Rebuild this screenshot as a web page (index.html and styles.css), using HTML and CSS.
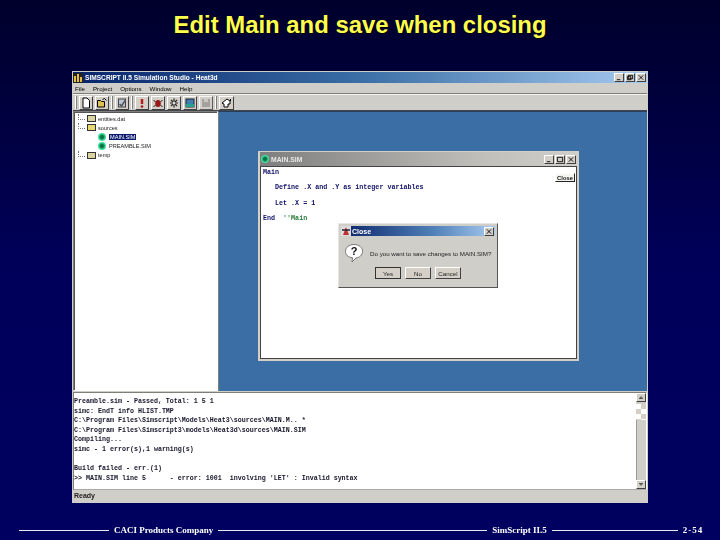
FILE: index.html
```html
<!DOCTYPE html>
<html lang="en">
<head>
<meta charset="utf-8">
<title>Edit Main and save when closing</title>
<link rel="stylesheet" href="styles.css">
</head>
<body>
<h1 class="slide-title">Edit Main and save when closing</h1>
<main class="app">
  <div class="titlebar">
    <svg class="app-icon" viewBox="0 0 10 10"><rect width="10" height="10" fill="#222"/><path d="M1 9V3h2v6zM4 9V1h2v8zM7 9V4h2v5z" fill="#e8c040"/></svg>
    <span class="titlebar-text">SIMSCRIPT II.5 Simulation Studio - Heat3d</span>
    <span class="wincontrols">
      <span class="winbtn"><svg viewBox="0 0 9 8"><path d="M2 6.5h4" stroke="#000" fill="none"/></svg></span>
      <span class="winbtn"><svg viewBox="0 0 9 8"><path d="M2.5 1.5h5v4h-5zM1.5 3h4v3.5h-4z" stroke="#000" fill="none"/></svg></span>
      <span class="winbtn"><svg viewBox="0 0 9 8"><path d="M2 1.5l5 5M7 1.5l-5 5" stroke="#000" fill="none"/></svg></span>
    </span>
  </div>
  <nav class="menubar"><span>File</span><span>Project</span><span>Options</span><span>Window</span><span>Help</span></nav>
  <div class="toolbar">
    <span class="grip"></span>
    <span class="tool"><svg viewBox="0 0 11 12"><path d="M2.5 1h4l2.500 2.500V11h-6.500z" fill="#fff" stroke="#000"/></svg></span>
    <span class="tool"><svg viewBox="0 0 11 12"><path d="M1 10V3.500h3l1 1h3V10z" fill="#e0c050" stroke="#000"/><path d="M6 2.500l2-1 2 2" fill="none" stroke="#000"/></svg></span>
    <span class="grip"></span>
    <span class="tool"><svg viewBox="0 0 11 12"><rect x="2" y="2" width="7" height="8" fill="#b8c4d8" stroke="#444"/><path d="M3 7l2 2 4-6" fill="none" stroke="#555" stroke-width="1.500"/></svg></span>
    <span class="grip"></span>
    <span class="tool"><svg viewBox="0 0 11 12"><path d="M5.500 2v5" stroke="#b02020" stroke-width="2.500"/><circle cx="5.500" cy="9.500" r="1.300" fill="#a01818"/></svg></span>
    <span class="tool"><svg viewBox="0 0 11 12"><ellipse cx="5.500" cy="6.500" rx="2.800" ry="3.500" fill="#9a1818"/><path d="M1 3l2 2M10 3l-2 2M1 10l2-2M10 10l-2-2" stroke="#222"/></svg></span>
    <span class="tool"><svg viewBox="0 0 11 12"><path d="M5.500 1.500v9M1.500 6h8M2.500 3l6 6M8.500 3l-6 6" stroke="#222" stroke-width="1.200"/><circle cx="5.500" cy="6" r="1.500" fill="#ddd"/></svg></span>
    <span class="tool"><svg viewBox="0 0 11 12"><rect x="1.500" y="2" width="8" height="8" fill="#3f7fb0" stroke="#223"/><rect x="1.500" y="7" width="8" height="3" fill="#28a090"/></svg></span>
    <span class="tool tool-off"><svg viewBox="0 0 11 12"><rect x="1.500" y="2" width="8" height="8" fill="#989894"/><rect x="3.500" y="2" width="4" height="3" fill="#c8c6c2"/></svg></span>
    <span class="grip"></span>
    <span class="tool tool-wide"><svg viewBox="0 0 13 12"><path d="M2 6l5-4 3 2v3H8v3H4V7z" fill="#fff" stroke="#000"/><path d="M10.500 2v2" stroke="#000"/></svg></span>
  </div>
  <div class="workspace">
    <aside class="tree">
      <div class="tree-row"><span class="elbow"></span><span class="folder"></span><span>entities.dat</span></div>
      <div class="tree-row"><span class="elbow"></span><span class="folder folder-open"></span><span>sources</span></div>
      <div class="tree-row tree-leaf"><span class="file-icon"></span><span class="selected">MAIN.SIM</span></div>
      <div class="tree-row tree-leaf"><span class="file-icon"></span><span>PREAMBLE.SIM</span></div>
      <div class="tree-row"><span class="elbow"></span><span class="folder"></span><span>temp</span></div>
    </aside>
    <section class="mdi">
      <article class="child">
        <div class="child-title">
          <span class="file-icon"></span><span class="child-name">MAIN.SIM</span>
          <span class="wincontrols">
            <span class="winbtn"><svg viewBox="0 0 9 8"><path d="M2 6.500h4" stroke="#000" fill="none"/></svg></span>
            <span class="winbtn"><svg viewBox="0 0 9 8"><path d="M1.500 1.500h6v5h-6z" stroke="#000" fill="none"/></svg></span>
            <span class="winbtn"><svg viewBox="0 0 9 8"><path d="M2 1.500l5 5M7 1.500l-5 5" stroke="#000" fill="none"/></svg></span>
          </span>
        </div>
        <div class="editor">
          <button class="close-tag">Close</button>
          <pre class="code"><b>Main</b>

   Define .X and .Y as integer variables

   Let .X = 1

<b>End</b>  <span class="comment">''Main</span></pre>
        </div>
      </article>
      <div class="dialog">
        <div class="dialog-title">
          <svg class="dialog-icon" viewBox="0 0 10 10"><path d="M2 9l3-8 3 8z" fill="#c03030"/><path d="M1 4h8" stroke="#223" stroke-width="1.500"/></svg>
          <span class="dialog-name">Close</span>
          <span class="winbtn dialog-x"><svg viewBox="0 0 9 8"><path d="M2 1.500l5 5M7 1.500l-5 5" stroke="#000" fill="none"/></svg></span>
        </div>
        <div class="dialog-body">
          <svg class="question" viewBox="0 0 20 20"><path d="M10 1.500c5 0 8.500 2.800 8.500 6.800s-3.500 6.500-6.500 6.700l-4 4 .5-4.300C4 14.300 1.500 12 1.500 8.300 1.500 4.300 5 1.500 10 1.500z" fill="#fff" stroke="#777"/><text x="10" y="12" class="question-mark">?</text></svg>
          <span class="dialog-text">Do you want to save changes to MAIN.SIM?</span>
        </div>
        <div class="dialog-actions">
          <button class="btn btn-default">Yes</button>
          <button class="btn">No</button>
          <button class="btn">Cancel</button>
        </div>
      </div>
    </section>
  </div>
  <div class="output">
    <pre class="log">Preamble.sim - Passed, Total: 1 5 1
simc: EndT info HLIST.TMP
C:\Program Files\Simscript\Models\Heat3\sources\MAIN.M.. *
C:\Program Files\Simscript3\models\Heat3d\sources\MAIN.SIM
Compiling...
simc - 1 error(s),1 warning(s)

Build failed - err.(1)
&gt;&gt; MAIN.SIM line 5      - error: 1001  involving 'LET' : Invalid syntax</pre>
    <div class="scrollbar">
      <span class="arrow"><svg viewBox="0 0 9 9"><path d="M2 5.500h5M3.500 4h2" stroke="#000"/></svg></span>
      <span class="thumb"></span>
      <span class="track"></span>
      <span class="arrow"><svg viewBox="0 0 9 9"><path d="M2 3.500h5M3.500 5h2" stroke="#000"/></svg></span>
    </div>
  </div>
  <div class="statusbar">Ready</div>
</main>
<footer class="slide-footer">
  <span class="rule rule-a"></span><span>CACI Products Company</span>
  <span class="rule rule-b"></span><span>SimScript II.5</span>
  <span class="rule rule-c"></span><span class="page-no">2-54</span>
</footer>
</body>
</html>
```
FILE: styles.css
```css
* { box-sizing: border-box; }
html, body { margin: 0; height: 100%; }
body {
  width: 720px;
  height: 540px;
  overflow: hidden;
  display: flex;
  flex-direction: column;
  align-items: center;
  background: linear-gradient(#00002c 0%, #000038 14%, #00005a 50%, #000060 100%);
  font-family: "Liberation Sans", Arial, sans-serif;
}
.slide-title {
  height: 71px;
  margin: 0;
  padding-top: 11px;
  color: #ffff4d;
  font-size: 23.900px;
  line-height: 28px;
  font-weight: 700;
  text-shadow: 1px 1px 0 #000;
}
.app {
  width: 576px;
  height: 432px;
  display: flex;
  flex-direction: column;
  background: #d0cec8;
  padding: 1px;
  filter: blur(0.45px);
  color: #000;
  font-size: 7px;
}
.titlebar {
  height: 11px;
  flex: none;
  display: flex;
  align-items: center;
  background: linear-gradient(90deg, #08246b 0%, #3a6ea5 50%, #a6caf0 100%);
  color: #fff;
  font-weight: 700;
  font-size: 6.600px;
}
.app-icon { width: 10px; height: 10px; margin-right: 2px; }
.titlebar-text { flex: 1; white-space: nowrap; }
.wincontrols { display: flex; gap: 1px; margin-right: 1px; }
.winbtn {
  width: 10px;
  height: 9px;
  display: block;
  background: #d4d0c8;
  border: 1px solid;
  border-color: #fff #404040 #404040 #fff;
}
.winbtn svg { display: block; width: 8px; height: 7px; }
.menubar {
  height: 11px;
  flex: none;
  display: flex;
  align-items: center;
  gap: 8px;
  padding-left: 2px;
  border-bottom: 1px solid #807e78;
  font-size: 6.200px;
}
.toolbar {
  height: 17px;
  flex: none;
  display: flex;
  align-items: center;
  gap: 2px;
  padding-left: 2px;
  border-top: 1px solid #f4f2ee;
  border-bottom: 1px solid #40454f;
}
.grip {
  width: 2px;
  height: 13px;
  flex: none;
  border-left: 1px solid #fff;
  border-right: 1px solid #807e78;
}
.tool {
  width: 14px;
  height: 14px;
  flex: none;
  background: #d4d0c8;
  border: 1px solid;
  border-color: #fff #404040 #404040 #fff;
}
.tool svg { display: block; width: 12px; height: 12px; }
.tool-wide { width: 15px; }
.tool-wide svg { width: 13px; }
.tool-off { opacity: 0.8; }
.workspace { height: 280px; flex: none; display: flex; }
.tree {
  width: 145px;
  background: #fff;
  border: 1px solid;
  border-color: #807e78 #fff #fff #807e78;
  box-shadow: inset 1px 1px 0 #555;
  padding: 2px 0 0 4px;
  font-size: 5.600px;
  color: #222;
}
.tree-row { height: 9.200px; display: flex; align-items: center; gap: 2px; white-space: nowrap; }
.tree-leaf { padding-left: 20px; gap: 3px; }
.elbow {
  width: 7px;
  height: 6px;
  margin-top: -3px;
  border-left: 1px dotted #777;
  border-bottom: 1px dotted #777;
}
.folder {
  width: 9px;
  height: 7px;
  background: #d9d4a0;
  border: 1px solid #333;
}
.folder-open { background: #e8d870; }
.file-icon {
  width: 8px;
  height: 8px;
  flex: none;
  border-radius: 50%;
  background: radial-gradient(circle, #0c7040 25%, #40e0a0 60%);
}
.selected { background: #0a1a6e; color: #fff; padding: 0 1px; }
.mdi {
  position: relative;
  flex: 1;
  background: #3a6ea5;
  border-top: 1px solid #2a4058;
  border-left: 1px solid #807e78;
}
.child {
  position: absolute;
  left: 39px;
  top: 39px;
  width: 321px;
  height: 210px;
  display: flex;
  flex-direction: column;
  background: #d4d0c8;
  padding: 1px 2px 2px;
}
.child-title {
  height: 14px;
  flex: none;
  display: flex;
  align-items: center;
  gap: 2px;
  background: linear-gradient(90deg, #7e7e7e 0%, #c0bfba 70%, #d0cec8 100%);
  color: #e8e8e8;
  font-size: 6.800px;
  font-weight: 700;
  padding-left: 1px;
}
.child-name { flex: 1; }
.editor {
  position: relative;
  flex: 1;
  background: #fff;
  border: 1px solid #444;
}
.close-tag {
  position: absolute;
  top: 6px;
  right: 1px;
  width: 20px;
  height: 9px;
  padding: 0;
  background: #f4f4f0;
  border: 1px solid;
  border-color: #fff #222 #222 #fff;
  font: 700 5.800px "Liberation Sans", Arial, sans-serif;
  color: #111;
}
.code {
  margin: 0;
  padding: 2px 0 0 2px;
  font: 700 6.700px/7.700px "Liberation Mono", "Courier New", monospace;
  color: #101068;
}
.code b { color: #101068; }
.comment { color: #2a7a3a; }
.dialog {
  position: absolute;
  left: 119px;
  top: 111px;
  width: 160px;
  height: 65px;
  display: flex;
  flex-direction: column;
  background: #d0cec8;
  border: 1px solid;
  border-color: #e8e6e2 #555 #555 #e8e6e2;
  padding: 2px;
}
.dialog-title {
  height: 10px;
  flex: none;
  display: flex;
  align-items: center;
  gap: 1px;
  background: linear-gradient(90deg, #0a2468 0%, #5080b8 60%, #a6caf0 100%);
  color: #fff;
  font-size: 7px;
  font-weight: 700;
}
.dialog-icon { width: 10px; height: 10px; background: #ddd; }
.dialog-name { flex: 1; }
.dialog-x { margin-right: 1px; }
.dialog-body {
  display: flex;
  align-items: center;
  height: 31px;
  flex: none;
  padding: 3px 0 0 3px;
  gap: 6px;
}
.question { width: 20px; height: 20px; flex: none; }
.question-mark { font: 700 11px "Liberation Sans", Arial, sans-serif; text-anchor: middle; fill: #111; }
.dialog-text { font-size: 6.200px; white-space: nowrap; color: #222; }
.dialog-actions { display: flex; justify-content: center; gap: 4px; }
.btn {
  width: 26px;
  height: 12px;
  padding: 0;
  background: #d4d0c8;
  border: 1px solid;
  border-color: #fff #404040 #404040 #fff;
  font: 6.200px "Liberation Sans", Arial, sans-serif;
  color: #222;
}
.btn-default { outline: 1px solid #333; outline-offset: -1px; }
.output {
  height: 98px;
  flex: none;
  display: flex;
  background: #fff;
  border: 1px solid;
  border-color: #807e78 #fff #aaa #807e78;
  margin-top: 1px;
}
.log {
  flex: 1;
  margin: 0;
  padding: 4px 0 0 0;
  font: 700 6.670px/9.600px "Liberation Mono", "Courier New", monospace;
  color: #15152a;
  overflow: hidden;
}
.scrollbar {
  width: 10px;
  display: flex;
  flex-direction: column;
  background: #d0cec8;
}
.arrow {
  height: 9px;
  flex: none;
  background: #d4d0c8;
  border: 1px solid;
  border-color: #fff #404040 #404040 #fff;
}
.arrow svg { display: block; width: 8px; height: 7px; }
.thumb {
  height: 16px;
  flex: none;
  margin-top: 2px;
  background: repeating-conic-gradient(#d4d0c8 0 25%, #fff 0 50%) 0 0 / 10px 10px;
}
.track { flex: 1; border-left: 1px solid #999; }
.statusbar {
  flex: 1;
  padding: 2px 0 0 1px;
  font-size: 7px;
  font-weight: 700;
  color: #222;
  background: #d0cec8;
}
.slide-footer {
  flex: 1;
  width: 720px;
  display: flex;
  align-items: center;
  padding: 17px 0 0 19px;
  gap: 5px;
  color: #fff;
  font: 700 9px "Liberation Serif", "Times New Roman", serif;
  white-space: nowrap;
  filter: blur(0.3px);
}
.page-no { letter-spacing: 1px; }
.rule { height: 1px; background: #e8e8f0; }
.rule-a { width: 90px; }
.rule-b { width: 269px; }
.rule-c { width: 126px; }
```
